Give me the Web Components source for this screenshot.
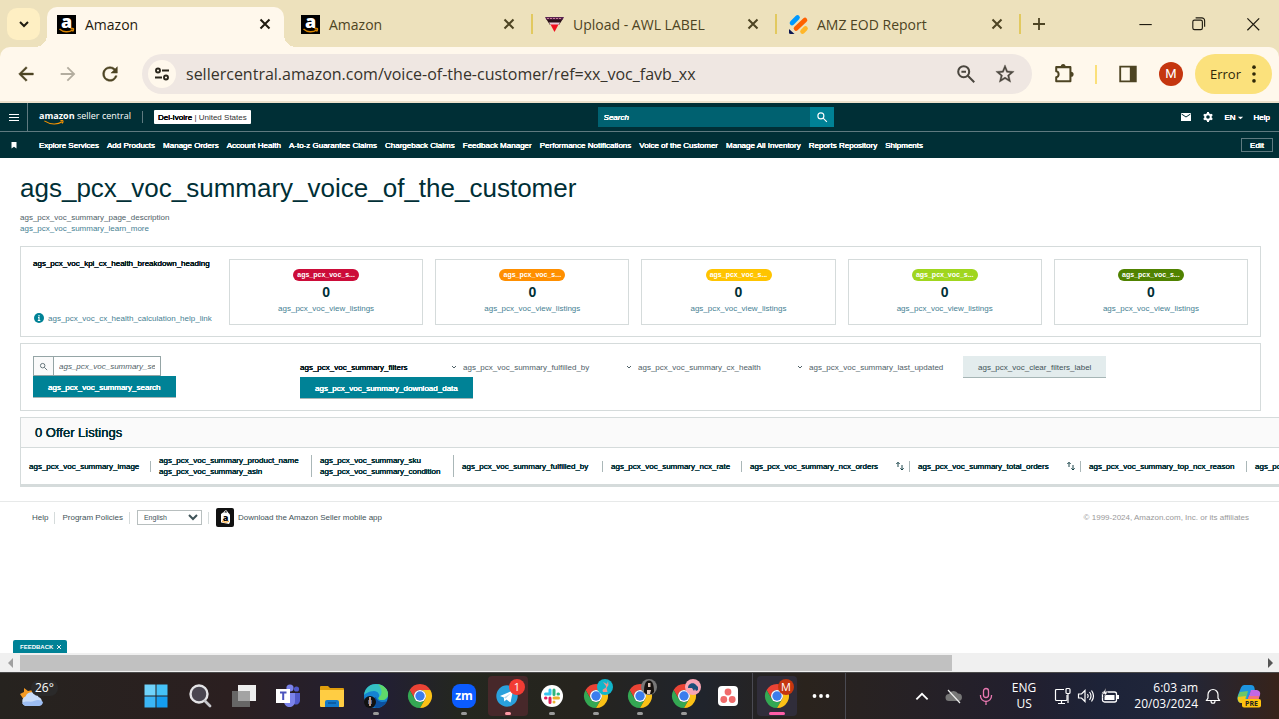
<!DOCTYPE html>
<html lang="en">
<head>
<meta charset="utf-8">
<title>Amazon</title>
<style>
body {
    margin: 0;
    height: 100vh;
    display: flex;
    flex-direction: column;
    overflow: hidden;
    background: #fff;
    font-family: "Liberation Sans", Arial, sans-serif;
    font-size: 8px;
    line-height: 11px;
    color: #002f36;
    /* Makes small labels a little heavier without the width of a bold face */
    --medium: 0 0 currentColor, 0 0 currentColor;
}
</style>
</head>
<body>

<browser-tabs></browser-tabs>
<browser-toolbar></browser-toolbar>
<seller-header></seller-header>
<voc-page></voc-page>
<scroll-track></scroll-track>
<task-bar></task-bar>

<script>
//! ICONS
const chromeLogo = `
    <path fill="#ea4335" d="M24 12h20.8A24 24 0 0 0 3.2 12l10.4 18A12 12 0 0 1 24 12z"/>
    <path fill="#34a853" d="M34.4 30 24 48A24 24 0 0 1 3.2 12l10.4 18A12 12 0 0 0 34.4 30z"/>
    <path fill="#fbc116" d="M24 12h20.8A24 24 0 0 1 24 48l10.4-18A12 12 0 0 0 24 12z"/>
    <circle cx="24" cy="24" r="12" fill="#fff"/><circle cx="24" cy="24" r="9.4" fill="#3b7ded"/>`

//? Every icon is [viewBox, content]
const icons = {
    down: ['0 0 16 16', '<path d="M4 6l4 4 4-4" fill="none" stroke="currentColor" stroke-width="2"/>'],
    x: ['0 0 16 16', '<path d="M4 4l8 8M12 4l-8 8" fill="none" stroke="currentColor" stroke-width="1.8"/>'],
    plus: ['0 0 16 16', '<path d="M8 2v12M2 8h12" fill="none" stroke="currentColor" stroke-width="1.8"/>'],
    minimise: ['0 0 16 16', '<path d="M3 8.5h11" stroke="currentColor"/>'],
    restore: ['0 0 16 16', '<rect x="2.500" y="4.500" width="8.500" height="8.500" rx="1.500" fill="none" stroke="currentColor"/><path d="M5 2.500h5.500a2.500 2.500 0 0 1 2.500 2.500v5.500" fill="none" stroke="currentColor"/>'],
    close: ['0 0 16 16', '<path d="M3 3l10.500 10.500M13.500 3L3 13.500" stroke="currentColor" stroke-width="1.100"/>'],
    back: ['0 0 24 24', '<path fill="currentColor" d="M20 11H7.830l5.590-5.590L12 4l-8 8 8 8 1.410-1.410L7.830 13H20v-2z" stroke="currentColor" stroke-width=".5"/>'],
    forward: ['0 0 24 24', '<path fill="currentColor" d="M12 4l-1.410 1.410L16.170 11H4v2h12.170l-5.580 5.590L12 20l8-8z"/>'],
    reload: ['0 0 24 24', '<path fill="currentColor" stroke="currentColor" stroke-width=".5" d="M17.650 6.350A7.960 7.960 0 0 0 12 4a8 8 0 1 0 7.730 10h-2.080A6 6 0 1 1 12 6c1.660 0 3.140.690 4.220 1.780L13 11h7V4l-2.350 2.350z"/>'],
    tune: ['0 0 18 18', '<g fill="none" stroke="currentColor" stroke-width="1.900"><circle cx="5" cy="5.500" r="2"/><path d="M9 5.500h7M2 12.500h7"/><circle cx="13" cy="12.500" r="2"/></g>'],
    zoomout: ['0 0 24 24', '<g fill="none" stroke="currentColor" stroke-width="2.200"><circle cx="9.500" cy="9.500" r="6"/><path d="M14 14l7 7M7 9.500h5"/></g>'],
    star: ['0 0 24 24', '<path fill="currentColor" d="M22 9.240l-7.190-.620L12 2 9.190 8.630 2 9.240l5.460 4.730L5.820 21 12 17.270 18.180 21l-1.630-7.030L22 9.240zM12 15.400l-3.760 2.270 1-4.280-3.320-2.880 4.380-.380L12 6.100l1.710 4.040 4.380.380-3.320 2.880 1 4.280L12 15.400z" stroke="currentColor" stroke-width=".4"/>'],
    puzzle: ['0 0 24 24', '<path fill="none" stroke="currentColor" stroke-width="2.200" stroke-linejoin="round" d="M3.500 4.500h15.500v15.500H3.500v-4.500c3.500-.5 3.500-6 0-6.500z"/><path fill="currentColor" d="M8.500 4a2.600 3 0 0 1 5.200 0zM19.500 9.500a3 2.800 0 0 1 0 5.600z"/>'],
    sidepanel: ['0 0 24 24', '<path fill="currentColor" fill-rule="evenodd" d="M2.500 3h19v18h-19zM4.500 5v14h9.500V5z"/>'],
    dots: ['0 0 24 24', '<g fill="currentColor"><circle cx="12" cy="4.500" r="2"/><circle cx="12" cy="12" r="2"/><circle cx="12" cy="19.500" r="2"/></g>'],
    favAmazon: ['0 0 19 19', '<path d="M0 0h19v19H0z"/><text x="9.500" y="12.500" text-anchor="middle" font-family="Open Sans, sans-serif" font-weight="800" font-size="18" fill="#fff">a</text><path d="M2.500 14c4 3.600 9.500 3.600 13 1M13.500 13.800c1.500-.5 3-.5 3 .2s-.5 2-1 2.600" fill="none" stroke="#d98400" stroke-width="1.500"/>'],
    favAwl: ['0 0 19 19', '<path d="M0 2h19l-1.500 3h-16z" fill="#5a2450"/><path d="M1.500 4.500h16L14 10H5z" fill="#2b1018"/><path d="M2 3.500h15" stroke="#c87a9a" stroke-dasharray="2 1"/><path d="M4 7.500h11L13.500 10h-8z" fill="#e8c8d8"/><path d="M5.500 9.500h8L9.500 17z" fill="#f01020"/>'],
    favEod: ['0 0 19 19', '<g stroke-linecap="round" stroke-width="4.600"><path d="M3 8l5.500-5.500" stroke="#0099ff"/><path d="M7 13.500L16 5" stroke="#ff6100"/><path d="M13.500 16.500l3-3" stroke="#ffb629"/></g><path d="M0 14l5.500 5H1.500Q0 19 0 17.500z" fill="#0a1551"/>'],
    menu: ['0 0 12 12', '<path d="M1 3.500h10M1 6.500h10M1 9.500h10" stroke="currentColor"/>'],
    search: ['0 0 16 16', '<g fill="none" stroke="currentColor" stroke-width="1.500"><circle cx="6.500" cy="6.500" r="4"/><path d="M9.500 9.500l5 5"/></g>'],
    mail: ['0 0 12 12', '<path d="M1 2h10v8H1z" fill="currentColor"/><path d="M1.500 3L6 6l4.500-3" fill="none" stroke="#002f36"/>'],
    gear: ['0 0 12 12', '<circle cx="6" cy="6" r="2.800" fill="none" stroke="currentColor" stroke-width="2"/><path d="M6 1v2M6 9v2M1.700 3.500l1.600 1M8.700 7.500l1.600 1M1.700 8.500l1.600-1M8.700 4.500l1.600-1" stroke="currentColor" stroke-width="2"/>'],
    caret: ['0 0 8 8', '<path d="M1 3h6L4 6z" fill="currentColor"/>'],
    bookmark: ['0 0 8 8', '<path d="M1.500 1h5v6.500L4 5.800 1.500 7.500z" fill="currentColor"/>'],
    smile: ['0 0 36 6', '<path d="M6 1c7 4.500 15 4.500 20 1M24 .8c2-.6 3.500-.3 3 1.600L26 4" fill="none" stroke="#f79400" stroke-width="1.300"/>'],
    info: ['0 0 10 10', '<circle cx="5" cy="5" r="5" fill="#008296"/><path d="M5 2v1.400M4 4.500h1v3M3.800 7.500h2.500" fill="none" stroke="#fff" stroke-width="1.100"/>'],
    sort: ['0 0 10 10', '<path d="M3 6V1.500M1.300 3L3 1.300 4.700 3M7 4v5M5.300 7.300L7 9l1.700-1.700" fill="none" stroke="currentColor" stroke-width=".9"/>'],
    sellerApp: ['0 0 19 19', '<rect width="18" height="19" rx="2" fill="#111"/><path d="M7 4.500L5 6v8.500l8 1.500 1-2V6.500L12 4.500z" fill="#fff"/><path d="M8 5c0-3 3.500-3 3.500 0" fill="none" stroke="#fff"/><text x="9.500" y="12.500" text-anchor="middle" font-family="Open Sans, sans-serif" font-weight="800" font-size="9">a</text><path d="M6 13c2 1.500 5 1.500 7 0" fill="none" stroke="#f79400"/>'],
    arrowLeft: ['0 0 8 12', '<path d="M7 1v10L2 6z" fill="currentColor"/>'],
    arrowRight: ['0 0 8 12', '<path d="M1 1v10l5-5z" fill="currentColor"/>'],
    weather: ['0 0 24 24', '<path d="M0 10l4-2 0-4 4 3 5-1-3 10H4z" fill="#f59a23"/><path d="M6 22a5 5 0 0 1-.5-9.500A7 7 0 0 1 18.500 13a4.700 4.700 0 0 1 0 9z" fill="#c9dcf8"/><path d="M6 22a5 5 0 0 1-4-3c5-3 8 0 12-2s7-1 9 1a4.600 4.600 0 0 1-4.500 4z" fill="#9dbdf2"/>'],
    windows: ['0 0 24 24', '<path d="M.5.5h11v11H.5z" fill="#6fd3fb"/><path d="M12.500.5h11v11h-11z" fill="#45c2f8"/><path d="M.5 12.500h11v11H.5z" fill="#3bb5f5"/><path d="M12.500 12.500h11v11h-11z" fill="#149df0"/>'],
    taskSearch: ['0 0 24 24', '<circle cx="11" cy="10" r="8.500" fill="#4a4650" stroke="#e4e4e6" stroke-width="2.400"/><path d="M17 17l5 5" stroke="#c8c8cc" stroke-width="2.800" stroke-linecap="round"/>'],
    taskView: ['0 0 24 24', '<path d="M6 1h18v16H6z" fill="#eee"/><path d="M0 7h18v16H0z" fill="#6c6c6c" fill-opacity=".92"/><path d="M6 7h12v10H6z" fill="#a3a3a3"/>'],
    teams: ['0 0 24 24', '<circle cx="14" cy="4" r="3.600" fill="#7b83eb"/><circle cx="20.500" cy="5" r="2.600" fill="#5059c9"/><path d="M17 9h7v8a4 4 0 0 1-6 3z" fill="#5059c9"/><path d="M8 9h11v8c0 8-11 8-11 0z" fill="#7b83eb"/><path d="M0 5h14v14H0z" fill="#fff"/><path d="M4 8.500h6.500M7.200 8.500v7.500" stroke="#4b53bc" stroke-width="2"/>'],
    folder: ['0 0 24 24', '<path d="M0 3q0-1 1-1h7l2 2h13q1 0 1 1v4H0z" fill="#e09e0c"/><path d="M0 6h24v16q0 1-1 1H1q-1 0-1-1z" fill="#ffcd43"/><path d="M5 23v-5q0-2 2-2h10q2 0 2 2v5z" fill="#1279ca"/><path d="M8 19h8" stroke="#0b5596" stroke-width="1.500"/>'],
    edge: ['0 0 24 24', '<circle cx="12" cy="12" r="12" fill="#1483d2"/><path d="M0 11C1 3 7 0 12 0c7 0 12 5 12 10 0 4-3 6-6 6-4 0-4-1.500-3-3 1-2-1-6-5-6-5 0-9 3-10 4z" fill="#35c1c5"/><path d="M14 .2c6 1 10 5 10 9.800 0 4-3 6-6 6-4 0-4-1.500-3-3 4-2 3-9-1-12.800z" fill="#5fd96a"/><path d="M12 13c1 5 7 6 11 4-2 4-6 7-11 7-5-3-5-9 0-11z" fill="#0c50a0"/><circle cx="6" cy="18" r="6" fill="#111"/><path d="M6 13v9" stroke="#b98" stroke-width="2"/><path d="M4.500 16v4M7.500 16v4" stroke="#67a" stroke-width=".8"/>'],
    chrome: ['0 0 48 48', chromeLogo],
    zoom: ['0 0 24 24', '<rect width="24" height="24" rx="8" fill="#0b5cff"/><text x="12" y="16" text-anchor="middle" font-family="Open Sans, sans-serif" font-weight="700" font-size="12" fill="#fff">zm</text>'],
    telegram: ['0 0 24 24', '<circle cx="11" cy="12" r="10.700" fill="#2aa1dc"/><path d="M4 12l13-5.500-2.500 12-4-3-2.200 2-.5-4z" fill="#fff"/><path d="M8 13.500l7-4.500-5.300 5.500" fill="#b5d8ec"/>'],
    slack: ['0 0 24 24', '<circle cx="12" cy="12" r="11" fill="#fff"/><g stroke-width="3" stroke-linecap="round"><path d="M10 6v4M5.500 10H10" stroke="#36c5f0"/><path d="M14 6v4.500M18.500 10h-.5" stroke="#2eb67d"/><path d="M14 14h4.500M14 18v0" stroke="#ecb22e"/><path d="M10 14v4.500M5.500 14h.5" stroke="#e01e5a"/></g>'],
    asana: ['0 0 24 24', '<rect x="2" y="2" width="20" height="20" rx="4" fill="#fff"/><g fill="#f06a6a"><circle cx="12" cy="8" r="3.400"/><circle cx="7.800" cy="15.500" r="3.400"/><circle cx="16.200" cy="15.500" r="3.400"/></g>'],
    rabbit: ['0 0 16 16', '<circle cx="8" cy="8" r="8" fill="#12b5cb"/><path d="M6 13c-2-4 4-3 3-6L6 3l4 2 1-3 .5 4-2 3 1 4z" fill="#f2938c"/>'],
    portrait: ['0 0 16 16', '<circle cx="8" cy="8" r="8" fill="#777"/><path d="M3 13C3 7 4 1.500 8 1.500S13 7 13 13l-2 2H5z" fill="#15110f"/><path d="M7 4h2.500v4H7zM6 11h4l-1 4H6z" fill="#dcc5b8"/>'],
    elephant: ['0 0 16 16', '<circle cx="8" cy="8" r="8" fill="#f9a5b4"/><path d="M3 9c0-5 6-6 8-3l2 2v3l-2 1-1-2-1 2-2-3z" fill="#1c4f7a"/>'],
    ellipsis: ['0 0 24 24', '<g fill="#fff"><circle cx="5.500" cy="12" r="1.900"/><circle cx="12" cy="12" r="1.900"/><circle cx="18.500" cy="12" r="1.900"/></g>'],
    up: ['0 0 16 16', '<path d="M3 11l5-5 5 5" fill="none" stroke="currentColor" stroke-width="1.600"/>'],
    cloud: ['0 0 18 18', '<path d="M4 14a3.500 3.500 0 0 1 0-7 5 5 0 0 1 9-.5 3.800 3.800 0 0 1 1 7.500z" fill="#777"/><path d="M3 3l12 13" stroke="#eee" stroke-width="1.200"/>'],
    mic: ['0 0 18 18', '<g fill="none" stroke="#e878b0" stroke-width="1.300"><rect x="6.500" y="1.500" width="5" height="9" rx="2.500"/><path d="M3.500 8v1a5.500 5.500 0 0 0 11 0V8M9 14.500V18"/></g>'],
    network: ['0 0 18 18', '<g fill="none" stroke="currentColor" stroke-width="1.200"><path d="M11 2.500H3.500q-1 0-1 1v9q0 1 1 1H13q1 0 1-1V8M5 16.500h7M8.500 13.500v3"/><rect x="13" y="1.500" width="4" height="5" rx="1"/><path d="M15 6.500V16"/></g>'],
    sound: ['0 0 18 18', '<g fill="none" stroke="currentColor" stroke-width="1.200"><path d="M1.500 7h3L8 3.500v11L4.500 11h-3zM10.500 7q1.500 2 0 4M12.500 5q3 4 0 8M14.500 3.500q4 5.500 0 11"/></g>'],
    battery: ['0 0 18 18', '<rect x="1.500" y="5" width="14" height="10" rx="2" fill="none" stroke="currentColor" stroke-width="1.300"/><path d="M3.500 8h10v5h-10zM16 8h2v4h-2z" fill="currentColor"/><path d="M5 1L1 7h3L2 11l5-6H4.500z" fill="currentColor" stroke="#232330" stroke-width=".5"/>'],
    bell: ['0 0 18 18', '<path d="M2.500 13.500h13L14 11V7.500A5 5 0 0 0 4 7.500V11zM7 14c0 3 4 3 4 0" fill="none" stroke="currentColor" stroke-width="1.200"/>'],
    copilot: ['0 0 24 24', '<path d="M7 1h7q3 0 3.500 3L18 7h-4L9 19H5c-4 0-5-4-4-8L4 3.500Q5 1 7 1z" fill="#1d95e0"/><path d="M3 8l8-1-3 12H5C0 19 0 14 1 12z" fill="#6cc668"/><path d="M1 13l8-1-2 7H5c-3 0-4.500-2-4-6z" fill="#f3c81f"/><path d="M14 6h6q4 1 3 5l-2 6q-1 3-4 3H9z" fill="#c267e6"/><path d="M12 12h10l-1 5H10z" fill="#f3737c"/><rect x="5" y="15" width="19" height="8.500" rx="2" fill="#ffc20e"/><text x="14.500" y="21.800" text-anchor="middle" font-family="Open Sans, sans-serif" font-weight="700" font-size="7" fill="#222">PRE</text>']
}

class UiIcon extends HTMLElement {
    constructor() {
        super();
        this.attachShadow({ mode: 'open' });
    }

    connectedCallback() {
        const [box, content] = icons[this.getAttribute('name')]
        this.shadowRoot.innerHTML = `
<style>
:host { display: inline-flex; flex: none; width: var(--icon-size, 16px); }
svg { display: block; width: 100%; overflow: visible; }
</style>
<svg viewBox="${box}" aria-hidden="true">${content}</svg>`
    }
}

//? Small helper: turns a HTML string into an element with its own shadow root
function define(name, html) {
    const template = document.createElement('template')
    template.innerHTML = html

    customElements.define(name, class extends HTMLElement {
        constructor() {
            super();
            this.attachShadow({ mode: 'open' });
            this.shadowRoot.appendChild(template.content.cloneNode(true));
        }
    })
}

//! BROWSER TABS
define('browser-tab', `
<style>
:host {
    display: flex;
    align-items: center;
    flex: 0 1 237px;
    box-sizing: border-box;
    height: 40px;
    padding: 0 10px 6px;
    color: #4d4423;
    font-size: 14px;
    line-height: 20px;
    --icon-size: 19px;
}
:host([active]) {
    position: relative;
    background: #fff8ec;
    border-radius: 10px 10px 0 0;
    color: #1f1b10;
}
/* The curved feet of the active tab */
:host([active])::before, :host([active])::after {
    content: "";
    position: absolute;
    bottom: 0;
    width: 12px;
    height: 12px;
}
:host([active])::before {
    left: -12px;
    background: radial-gradient(circle at 0 0, transparent 12px, #fff8ec 12px);
}
:host([active])::after {
    right: -12px;
    background: radial-gradient(circle at 100% 0, transparent 12px, #fff8ec 12px);
}
.title { flex: 1; padding: 2px 9px 0; white-space: nowrap; }
.icon { display: flex; }
button {
    display: flex;
    padding: 0;
    border: 0;
    background: none;
    color: inherit;
    --icon-size: 18px;
}
</style>
<span class="icon"><slot name="icon"></slot></span>
<span class="title"><slot></slot></span>
<button aria-label="Close tab"><ui-icon name="x"></ui-icon></button>
`)

define('tab-divider', `
<style>
:host { display: block; flex: none; width: 2px; height: 20px; margin: 0 2px 6px 3px; background: var(--divider, transparent); }
</style>
`)

define('browser-tabs', `
<style>
:host {
    display: flex;
    align-items: center;
    flex: none;
    padding: 7px 0 0 7px;
    background: #ede1bc;
    font-family: "Open Sans", "Noto Sans", sans-serif;
}
button { display: flex; justify-content: center; padding: 0; border: 0; background: none; color: #1f1b10; }
.list {
    width: 33px;
    height: 32px;
    align-items: center;
    margin: 0 7px 6px 0;
    border-radius: 10px;
    background: #feefc3;
}
.tabs { display: flex; align-items: center; flex: 1; min-width: 0; }
tab-divider.on { --divider: #e2c95f; }
.new { margin: 0 0 6px 8px; color: #4d4423; }
.window { display: flex; gap: 36px; padding: 0 17px 6px 0; }
.window button { --icon-size: 18px; }
</style>
<button class="list" aria-label="Search tabs"><ui-icon name="down"></ui-icon></button>
<div class="tabs">
    <browser-tab active><ui-icon slot="icon" name="favAmazon"></ui-icon>Amazon</browser-tab>
    <tab-divider></tab-divider>
    <browser-tab><ui-icon slot="icon" name="favAmazon"></ui-icon>Amazon</browser-tab>
    <tab-divider class="on"></tab-divider>
    <browser-tab><ui-icon slot="icon" name="favAwl"></ui-icon>Upload - AWL LABEL</browser-tab>
    <tab-divider class="on"></tab-divider>
    <browser-tab><ui-icon slot="icon" name="favEod"></ui-icon>AMZ EOD Report</browser-tab>
    <tab-divider class="on"></tab-divider>
    <button class="new" aria-label="New tab"><ui-icon name="plus"></ui-icon></button>
</div>
<div class="window">
    <button aria-label="Minimise"><ui-icon name="minimise"></ui-icon></button>
    <button aria-label="Restore"><ui-icon name="restore"></ui-icon></button>
    <button aria-label="Close"><ui-icon name="close"></ui-icon></button>
</div>
`)

//! BROWSER TOOLBAR
define('browser-toolbar', `
<style>
:host {
    display: block;
    flex: none;
    background: #ede1bc;
    border-bottom: 2px solid #ece1cc;
    font-family: "Open Sans", "Noto Sans", sans-serif;
    --icon-size: 22px;
}
.bar {
    display: flex;
    align-items: center;
    padding: 7px 7px 7px 15px;
    border-radius: 10px 10px 0 0;
    background: #fff8ec;
    color: #4d4423;
}
button { display: flex; padding: 0; border: 0; background: none; color: inherit; font-family: inherit; }
.nav { display: flex; gap: 20px; margin-right: 21px; }
.off { color: #b3ad9f; }
.address {
    display: flex;
    align-items: center;
    flex: 1;
    box-sizing: border-box;
    height: 40px;
    padding: 0 16px 0 6px;
    gap: 17px;
    border-radius: 20px;
    background: #efe7e2;
    color: #4a463e;
}
.site {
    width: 28px;
    height: 28px;
    align-items: center;
    justify-content: center;
    border-radius: 50%;
    background: #fff8ec;
    color: #2a261c;
    margin-right: -7px;
    --icon-size: 18px;
}
input {
    flex: 1;
    min-width: 0;
    padding: 0;
    border: 0;
    background: none;
    color: #37332b;
    font: 16px/24px "Open Sans", "Noto Sans", sans-serif;
}
.tools { display: flex; align-items: center; gap: 20px; padding: 0 12px 0 21px; }
.line { width: 2px; height: 19px; background: #fbe07a; }
.avatar {
    width: 24px;
    height: 24px;
    align-items: center;
    justify-content: center;
    border-radius: 50%;
    background: #c5360f;
    color: #fff;
    font: 13px/24px Roboto, sans-serif;
}
.error {
    align-items: center;
    height: 40px;
    padding: 0 7px 0 15px;
    gap: 2px;
    border-radius: 20px;
    background: #fbe17c;
    color: #2f2808;
    font-size: 13px;
}
</style>
<div class="bar">
    <div class="nav">
        <button aria-label="Back"><ui-icon name="back"></ui-icon></button>
        <button class="off" aria-label="Forward"><ui-icon name="forward"></ui-icon></button>
        <button aria-label="Reload"><ui-icon name="reload"></ui-icon></button>
    </div>
    <div class="address">
        <button class="site" aria-label="View site information"><ui-icon name="tune"></ui-icon></button>
        <input type="text" aria-label="Address" value="sellercentral.amazon.com/voice-of-the-customer/ref=xx_voc_favb_xx">
        <button aria-label="Zoom"><ui-icon name="zoomout"></ui-icon></button>
        <button aria-label="Bookmark this tab"><ui-icon name="star"></ui-icon></button>
    </div>
    <div class="tools">
        <button aria-label="Extensions"><ui-icon name="puzzle"></ui-icon></button>
        <span class="line"></span>
        <button aria-label="Side panel"><ui-icon name="sidepanel"></ui-icon></button>
        <button class="avatar" aria-label="Profile">M</button>
    </div>
    <button class="error">Error <ui-icon name="dots"></ui-icon></button>
</div>
`)

//! SELLER CENTRAL HEADER
define('seller-header', `
<style>
:host { display: block; flex: none; background: #002f36; color: #fff; --icon-size: 12px; }
button { display: flex; align-items: center; padding: 0; border: 0; background: none; color: inherit; font: inherit; text-shadow: inherit; }
a { color: inherit; text-decoration: none; }
.top { display: flex; align-items: center; justify-content: space-between; height: 28px; border-bottom: 1px solid #5f7a80; }
.left, .right { display: flex; align-items: center; }
.left { align-self: stretch; }
.menu { align-self: stretch; padding: 0 7px 0 8px; border-right: 1px solid #5f7a80; }
.logo { display: flex; flex-direction: column; margin-left: 11px; font: 9px/12px "Open Sans", sans-serif; --icon-size: 32px; height: 14px; }
.logo ui-icon { margin-top: -2px; }
.line { width: 1px; height: 12px; margin: 0 11px; background: #5f7a80; }
.store { height: 14px; padding: 0 4px; border-radius: 1px; background: #fff; color: #333; white-space: pre; }
.store b { color: #000; font-weight: normal; text-shadow: var(--medium); }
.search { display: flex; height: 20px; }
.search input {
    width: 212px;
    box-sizing: border-box;
    padding: 0 6px;
    border: 0;
    border-radius: 0;
    background: #006170;
    font: italic 8px "Liberation Sans", sans-serif;
    text-shadow: var(--medium);
}
.search input::placeholder { color: #fff; }
.search button { width: 24px; justify-content: center; background: #008296; }
.right { gap: 10px; padding-right: 9px; text-shadow: var(--medium); }
.right button { gap: 1px; }
.right .caret { --icon-size: 7px; }
.bottom { display: flex; align-items: center; height: 26px; padding: 0 6px 0 10px; text-shadow: var(--medium); }
.bottom > button { --icon-size: 8px; }
nav { display: flex; gap: 8px; flex: 1; margin-left: 21px; white-space: nowrap; }
.bottom .edit { box-sizing: border-box; width: 32px; height: 14px; justify-content: center; border: 1px solid #5f7a80; }
</style>
<header>
    <div class="top">
        <div class="left">
            <button class="menu" aria-label="Menu"><ui-icon name="menu"></ui-icon></button>
            <a class="logo" href="#"><span><b>amazon</b> seller central</span><ui-icon name="smile"></ui-icon></a>
            <span class="line"></span>
            <button class="store"><b>Del-Ivoire</b> | United States</button>
        </div>
        <form class="search">
            <input type="search" aria-label="Search" placeholder="Search">
            <button type="button" aria-label="Go"><ui-icon name="search"></ui-icon></button>
        </form>
        <div class="right">
            <button aria-label="Messages"><ui-icon name="mail"></ui-icon></button>
            <button aria-label="Settings"><ui-icon name="gear"></ui-icon></button>
            <button>EN <ui-icon class="caret" name="caret"></ui-icon></button>
            <a href="#">Help</a>
        </div>
    </div>
    <div class="bottom">
        <button aria-label="Favourites"><ui-icon name="bookmark"></ui-icon></button>
        <nav>
            <a href="#">Explore Services</a>
            <a href="#">Add Products</a>
            <a href="#">Manage Orders</a>
            <a href="#">Account Health</a>
            <a href="#">A-to-z Guarantee Claims</a>
            <a href="#">Chargeback Claims</a>
            <a href="#">Feedback Manager</a>
            <a href="#">Performance Notifications</a>
            <a href="#">Voice of the Customer</a>
            <a href="#">Manage All Inventory</a>
            <a href="#">Reports Repository</a>
            <a href="#">Shipments</a>
        </nav>
        <button class="edit">Edit</button>
    </div>
</header>
`)

//! PAGE PARTS
define('page-panel', `
<style>
:host { display: flex; border: 1px solid #d5dbdb; padding: 12px 12px 11px; margin: 0 18px 6px 20px; }
</style>
<slot></slot>
`)

define('kpi-card', `
<style>
:host {
    display: flex;
    flex-direction: column;
    align-items: center;
    flex: 1;
    box-sizing: border-box;
    height: 66px;
    padding-top: 9px;
    border: 1px solid #d5dbdb;
}
.pill {
    box-sizing: border-box;
    width: 66px;
    padding: 0 4px;
    border-radius: 6px;
    background: var(--pill);
    color: #fff;
    font-weight: bold;
    font-size: 7px;
    line-height: 12px;
    text-align: center;
}
strong { font-size: 14px; line-height: 23px; }
a { color: #467f93; text-decoration: none; line-height: 10px; }
</style>
<span class="pill"><slot></slot></span>
<strong>0</strong>
<a href="#">ags_pcx_voc_view_listings</a>
`)

define('teal-button', `
<style>
:host { display: block; }
button {
    height: 22px;
    padding: 0 15px;
    border: 0;
    background: #008296;
    box-shadow: inset 0 -1px #a6b5b5;
    color: #fff;
    font: 8px "Liberation Sans", sans-serif;
    text-shadow: var(--medium);
    white-space: nowrap;
}
:host([plain]) button { background: #e3eced; color: #3f5358; text-shadow: none; }
</style>
<button><slot></slot></button>
`)

class FilterSelect extends HTMLElement {
    constructor() {
        super();
        this.attachShadow({ mode: 'open' });
    }

    connectedCallback() {
        const label = this.getAttribute('label')
        this.shadowRoot.innerHTML = `
<style>
:host { display: flex; align-items: center; --icon-size: 8px; color: #4f6167; }
select { appearance: none; border: 0; padding: 0 0 0 5px; margin: 0; background: none; color: inherit; font: 8px/11px "Liberation Sans", sans-serif; }
</style>
<ui-icon name="down"></ui-icon>
<select aria-label="${label}"><option>${label}</option></select>`
    }
}

define('offer-table', `
<style>
:host {
    display: block;
    overflow: hidden;
    margin-left: 20px;
    border: solid #d5dbdb;
    border-width: 1px 0 3px 1px;
}
h2 {
    margin: 0;
    padding: 0 14px;
    background: #fafafa;
    border-bottom: 1px solid #d5dbdb;
    font-size: 13px;
    font-weight: normal;
    line-height: 29px;
    text-shadow: var(--medium);
}
table { width: 1400px; table-layout: fixed; border-collapse: collapse; }
th { height: 36px; padding: 0 0 0 8px; text-align: left; font-weight: normal; text-shadow: var(--medium); white-space: nowrap; }
th div { display: flex; align-items: center; justify-content: space-between; border-right: 1px solid #aab7b8; }
.sorted { padding-right: 4px; --icon-size: 10px; }
</style>
<h2>0 Offer Listings</h2>
<table>
    <colgroup>
        <col width="130"><col width="161"><col width="142"><col width="149"><col width="139">
        <col width="168"><col width="171"><col width="166"><col>
    </colgroup>
    <thead>
        <tr>
            <th><div>ags_pcx_voc_summary_image</div></th>
            <th><div>ags_pcx_voc_summary_product_name<br>ags_pcx_voc_summary_asin</div></th>
            <th><div>ags_pcx_voc_summary_sku<br>ags_pcx_voc_summary_condition</div></th>
            <th><div>ags_pcx_voc_summary_fulfilled_by</div></th>
            <th><div>ags_pcx_voc_summary_ncx_rate</div></th>
            <th><div class="sorted">ags_pcx_voc_summary_ncx_orders <ui-icon name="sort"></ui-icon></div></th>
            <th><div class="sorted">ags_pcx_voc_summary_total_orders <ui-icon name="sort"></ui-icon></div></th>
            <th><div>ags_pcx_voc_summary_top_ncx_reason</div></th>
            <th>ags_pcx_voc_summary_last_updated</th>
        </tr>
    </thead>
</table>
`)

define('page-footer', `
<style>
:host { display: block; margin-top: 14px; border-top: 1px solid #e7e9e9; color: #3f5358; }
footer { display: flex; align-items: center; padding: 6px 30px 0 32px; }
a { display: flex; align-items: center; gap: 3px; color: inherit; text-decoration: none; --icon-size: 19px; }
.line { width: 1px; height: 12px; margin: 0 7px 0 6px; background: #d5dbdb; }
select {
    width: 65px;
    height: 15px;
    padding: 0 2px;
    border: 1px solid #b8bfbf;
    background: #fff;
    color: inherit;
    font: 7px "Liberation Sans", sans-serif;
}
small { margin-left: auto; color: #999; font-size: 8px; }
</style>
<footer>
    <a href="#">Help</a><span class="line"></span>
    <a href="#">Program Policies</a><span class="line"></span>
    <select aria-label="Language"><option>English</option></select><span class="line"></span>
    <a href="#"><ui-icon name="sellerApp"></ui-icon>Download the Amazon Seller mobile app</a>
    <small>© 1999-2024, Amazon.com, Inc. or its affiliates</small>
</footer>
`)

//! VOICE OF THE CUSTOMER PAGE
define('voc-page', `
<style>
:host { display: block; position: relative; flex: 1; min-height: 0; overflow: hidden; }
h1 { margin: 13px 20px 7px; font-size: 26px; line-height: 34px; font-weight: normal; }
p { margin: 0 20px; color: #4f6167; }
a { color: #467f93; text-decoration: none; }
b { color: #001418; font-weight: normal; text-shadow: var(--medium); }
.intro { margin-bottom: 12px; }
.cards { gap: 12px; }
.health { display: flex; flex-direction: column; justify-content: space-between; width: 184px; padding-bottom: 2px; line-height: 9px; }
.health a { display: flex; align-items: center; gap: 4px; padding-left: 1px; --icon-size: 10px; }
.find { width: 267px; }
.box { display: flex; box-sizing: border-box; width: 128px; height: 20px; border: 1px solid #95a5a6; }
.box label { display: flex; align-items: center; padding: 0 5px; border-right: 1px solid #95a5a6; background: #fafafa; color: #4f6167; --icon-size: 9px; }
.box input { width: 100%; min-width: 0; padding: 0 5px; border: 0; font: italic 8px "Liberation Sans", sans-serif; }
.box input::placeholder { color: #4f6167; }
.filters { flex: 1; }
.row { display: grid; grid-template-columns: 150px 175px 171px 167px auto; align-items: center; justify-content: start; height: 21px; }
.feedback {
    position: absolute;
    left: 13px;
    bottom: 0;
    display: flex;
    align-items: center;
    height: 13px;
    gap: 2px;
    padding: 0 4px 0 7px;
    border: 0;
    border-radius: 2px 2px 0 0;
    background: #008296;
    color: #fff;
    font: bold 6px "Liberation Sans", sans-serif;
    --icon-size: 8px;
}
</style>
<h1>ags_pcx_voc_summary_voice_of_the_customer</h1>
<p>ags_pcx_voc_summary_page_description</p>
<p class="intro"><a href="#">ags_pcx_voc_summary_learn_more</a></p>

<page-panel class="cards">
    <div class="health">
        <b>ags_pcx_voc_kpi_cx_health_breakdown_heading</b>
        <a href="#"><ui-icon name="info"></ui-icon>ags_pcx_voc_cx_health_calculation_help_link</a>
    </div>
    <kpi-card style="--pill: #cc0c39">ags_pcx_voc_s...</kpi-card>
    <kpi-card style="--pill: #ff8f00">ags_pcx_voc_s...</kpi-card>
    <kpi-card style="--pill: #ffc400">ags_pcx_voc_s...</kpi-card>
    <kpi-card style="--pill: #a0d61e">ags_pcx_voc_s...</kpi-card>
    <kpi-card style="--pill: #508200">ags_pcx_voc_s...</kpi-card>
</page-panel>

<page-panel>
    <div class="find">
        <div class="box">
            <label for="find"><ui-icon name="search"></ui-icon></label>
            <input id="find" type="text" aria-label="Search listings" placeholder="ags_pcx_voc_summary_search_placeholder">
        </div>
        <teal-button>ags_pcx_voc_summary_search</teal-button>
    </div>
    <div class="filters">
        <div class="row">
            <b>ags_pcx_voc_summary_filters</b>
            <filter-select label="ags_pcx_voc_summary_fulfilled_by"></filter-select>
            <filter-select label="ags_pcx_voc_summary_cx_health"></filter-select>
            <filter-select label="ags_pcx_voc_summary_last_updated"></filter-select>
            <teal-button plain>ags_pcx_voc_clear_filters_label</teal-button>
        </div>
        <teal-button>ags_pcx_voc_summary_download_data</teal-button>
    </div>
</page-panel>

<offer-table></offer-table>
<page-footer></page-footer>
<button class="feedback">FEEDBACK <ui-icon name="x"></ui-icon></button>
`)

//! HORIZONTAL SCROLL BAR
define('scroll-track', `
<style>
:host { display: flex; align-items: center; flex: none; height: 19px; background: #f0f0f0; color: #555; --icon-size: 8px; }
.arrow { display: flex; justify-content: center; width: 20px; }
.last { width: 16px; }
.first { color: #a0a0a0; }
.track { flex: 1; }
.thumb { width: 75%; height: 16px; background: #c1c1c1; }
</style>
<span class="arrow first"><ui-icon name="arrowLeft"></ui-icon></span>
<div class="track"><div class="thumb"></div></div>
<span class="arrow last"><ui-icon name="arrowRight"></ui-icon></span>
`)

//! TASKBAR
define('task-app', `
<style>
:host { display: block; flex: none; --icon-size: 24px; }
button {
    position: relative;
    display: flex;
    align-items: center;
    justify-content: center;
    width: 40px;
    height: 40px;
    padding: 0;
    border: 0;
    border-radius: 4px;
    background: var(--tile, none);
    color: #fff;
}
/* Running indicator under the icon */
button::after {
    content: "";
    position: absolute;
    bottom: 1px;
    width: var(--run, 0);
    height: 3px;
    border-radius: 2px;
    background: var(--run-color, #9a9a9a);
}
::slotted(*) { position: absolute; top: 3px; right: 3px; --icon-size: 16px; }
::slotted(span) {
    width: 16px;
    height: 16px;
    border-radius: 50%;
    font: 11px/16px "Open Sans", sans-serif;
    text-align: center;
}
</style>
<button><ui-icon></ui-icon><slot></slot></button>
`)

define('task-bar', `
<style>
:host {
    display: flex;
    align-items: center;
    flex: none;
    box-sizing: border-box;
    height: 47px;
    border-top: 1px solid #4a4a4a;
    background: linear-gradient(90deg, #26231f 0%, #2b1f20 18%, #221f33 30%, #24271f 36%, #26241e 45%, #20242c 55%, #2a231d 63%, #221f2e 80%, #1d2338 86%, #20263a 92%, #37231a 100%);
    color: #fff;
    font: 12px/16px "Open Sans", "Noto Sans", sans-serif;
}
.weather { display: flex; box-sizing: border-box; width: 136px; padding-left: 20px; --icon-size: 24px; }
.weather span { margin: -4px 0 0 -13px; padding: 0 4px; height: 16px; border-radius: 8px; background: #2b2a2a; }
.weather ui-icon { align-self: flex-end; }
.apps { display: flex; align-items: center; gap: 4px; }
.apps i { width: 1px; height: 46px; background: #4a4a52; }
.tray { display: flex; align-items: center; margin-left: auto; padding-right: 18px; --icon-size: 18px; }
.tray > * { flex: none; }
.center { text-align: center; }
.right { text-align: right; }
</style>
<div class="weather"><ui-icon name="weather"></ui-icon><span>26°</span></div>
<div class="apps" id="apps"></div>
<div class="tray">
    <ui-icon name="up" style="margin-right: 14px"></ui-icon>
    <ui-icon name="cloud" style="margin-right: 14px"></ui-icon>
    <ui-icon name="mic" style="margin-right: 17px"></ui-icon>
    <div class="center">ENG<br>US</div>
    <ui-icon name="network" style="margin-left: 17px"></ui-icon>
    <ui-icon name="sound" style="margin: 0 6px"></ui-icon>
    <ui-icon name="battery" style="margin-right: 15px"></ui-icon>
    <div class="right">6:03 am<br>20/03/2024</div>
    <ui-icon name="bell" style="margin: 0 15px 0 6px"></ui-icon>
    <ui-icon name="copilot" style="--icon-size: 24px"></ui-icon>
</div>
`)

customElements.define('ui-icon', UiIcon)
customElements.define('filter-select', FilterSelect)

//! Filling the taskbar: icon, name, running bar, badge
const apps = [
    { icon: 'windows', name: 'Start' },
    { icon: 'taskSearch', name: 'Search' },
    { icon: 'taskView', name: 'Task view' },
    { icon: 'teams', name: 'Teams' },
    { icon: 'folder', name: 'File Explorer' },
    { icon: 'edge', name: 'Edge', run: 6 },
    { icon: 'chrome', name: 'Chrome' },
    { icon: 'zoom', name: 'Zoom', run: 6 },
    { icon: 'telegram', name: 'Telegram', run: 6, runColor: '#ff9aa5', tile: '#47282a', badge: '<span style="background: #f23c34">1</span>' },
    { icon: 'slack', name: 'Slack', run: 6 },
    { icon: 'chrome', name: 'Chrome 1', run: 6, badge: '<ui-icon name="rabbit"></ui-icon>' },
    { icon: 'chrome', name: 'Chrome 2', run: 6, badge: '<ui-icon name="portrait"></ui-icon>' },
    { icon: 'chrome', name: 'Chrome 3', run: 6, badge: '<ui-icon name="elephant"></ui-icon>' },
    { icon: 'asana', name: 'Asana' },
    'line',
    { icon: 'chrome', name: 'Chrome 4', run: 16, runColor: '#ff5fa8', tile: '#302d3a', badge: '<span style="background: #c5360f">M</span>' },
    { icon: 'ellipsis', name: 'More' },
    'line'
]

const appList = document.querySelector('task-bar').shadowRoot.getElementById('apps')

apps.forEach(app => {
    if (app === 'line') {
        appList.appendChild(document.createElement('i'))
        return
    }
    const item = document.createElement('task-app')
    item.shadowRoot.querySelector('ui-icon').setAttribute('name', app.icon)
    item.shadowRoot.querySelector('button').setAttribute('aria-label', app.name)
    if (app.run) item.style.setProperty('--run', app.run + 'px')
    if (app.runColor) item.style.setProperty('--run-color', app.runColor)
    if (app.tile) item.style.setProperty('--tile', app.tile)
    if (app.badge) item.innerHTML = app.badge
    appList.appendChild(item)
})
</script>
</body>
</html>
